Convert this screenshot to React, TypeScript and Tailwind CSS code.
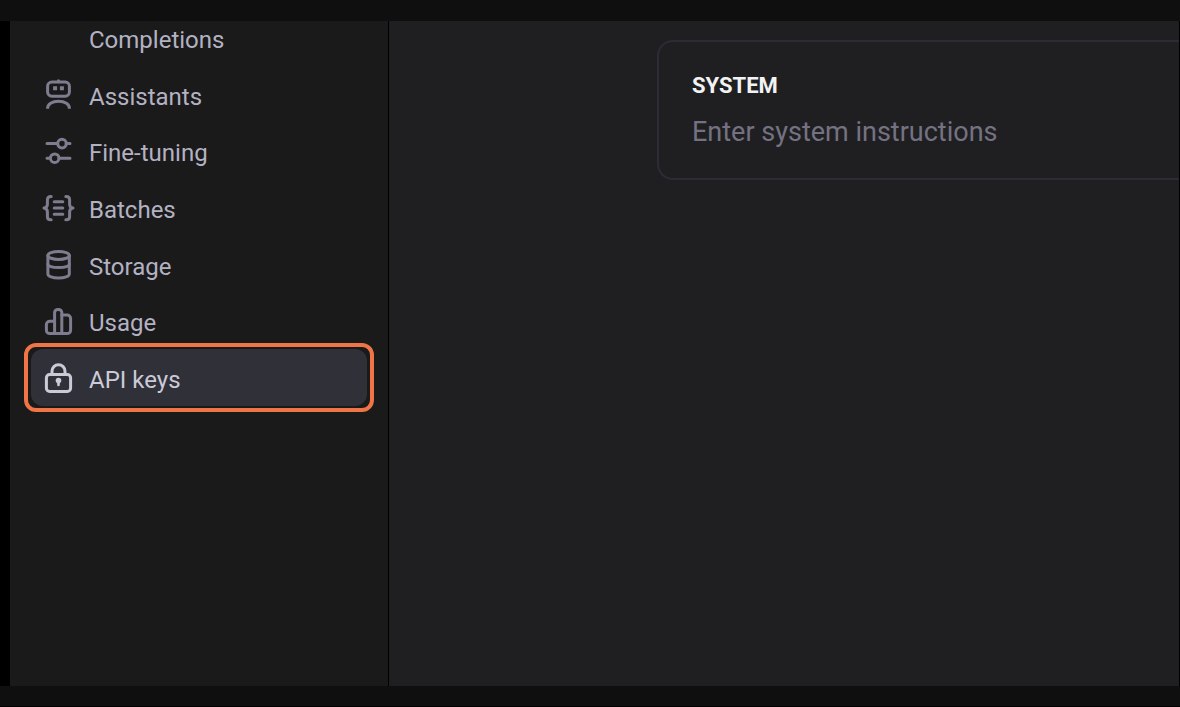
import type { ReactNode } from "react";
import clsx from "clsx";

type NavItem = {
  label: string;
  icon?: ReactNode;
  active?: boolean;
};

function Icon({ children }: { children: ReactNode }) {
  return (
    <svg
      viewBox="0 0 32 32"
      className="size-8 overflow-visible"
      fill="none"
      stroke="currentColor"
      strokeWidth="3"
      strokeLinecap="round"
      strokeLinejoin="round"
      aria-hidden="true"
    >
      {children}
    </svg>
  );
}

const navItems: NavItem[] = [
  { label: "Completions" },
  {
    label: "Assistants",
    icon: (
      <Icon>
        <path d="M16.5 1.8v1" />
        <rect x="5.6" y="3" width="21.8" height="14.2" rx="4.2" />
        <path
          d="M11.1 7.2h4v4h-4zM17.9 7.2h4v4h-4z"
          fill="currentColor"
          stroke="none"
        />
        <path d="M5.6 29.8v-.6c0-4 4.4-7 10.9-7s10.9 3 10.9 7v.6" strokeLinecap="butt" />
      </Icon>
    ),
  },
  {
    label: "Fine-tuning",
    icon: (
      <Icon>
        <path d="M5 8.6h10.6M24.2 8.6H28M5 23.2h3.4M17 23.2h11" />
        <circle cx="20" cy="8.6" r="4.3" />
        <circle cx="12.7" cy="23.2" r="4.3" />
      </Icon>
    ),
  },
  {
    label: "Batches",
    icon: (
      <Icon>
        <path d="M9.2 4.4H8.8c-2.2 0-3.4 1.2-3.4 3.4v4.4c0 2-1.2 3.6-3.4 3.9 2.2.3 3.4 1.9 3.4 3.9v4.4c0 2.2 1.2 3.4 3.4 3.4h.4" />
        <path d="M23.8 4.4h.4c2.2 0 3.4 1.2 3.4 3.4v4.4c0 2 1.2 3.6 3.4 3.9-2.2.3-3.4 1.9-3.4 3.9v4.4c0 2.2-1.2 3.4-3.4 3.4h-.4" />
        <path d="M12.2 9.8h8.6M12.2 16h8.6M12.2 22.2h8.6" />
      </Icon>
    ),
  },
  {
    label: "Storage",
    icon: (
      <Icon>
        <ellipse cx="16.6" cy="6.4" rx="10.7" ry="4" />
        <path d="M5.9 6.4v18.6c0 2.3 4.8 4.1 10.7 4.1s10.7-1.8 10.7-4.1V6.4" />
        <path d="M5.9 15.2c0 2 4.8 3.3 10.7 3.3s10.7-1.3 10.7-3.3" />
      </Icon>
    ),
  },
  {
    label: "Usage",
    icon: (
      <Icon>
        <path d="M12.6 28.6V7.6a3.2 3.2 0 0 1 3.2-3.2h.8a3.2 3.2 0 0 1 3.2 3.2v21" />
        <path d="M12.6 16.2H7.8a3.4 3.4 0 0 0-3.4 3.4v5.6a3.4 3.4 0 0 0 3.4 3.4h17.4a3.4 3.4 0 0 0 3.4-3.4V13.4a3.4 3.4 0 0 0-3.4-3.4h-5.4" />
      </Icon>
    ),
  },
  {
    label: "API keys",
    active: true,
    icon: (
      <Icon>
        <rect x="4.4" y="12.5" width="24.2" height="16.9" rx="3.2" />
        <path d="M10 12.4V9.2a6.5 6.5 0 0 1 13 0v3.2" />
        <circle cx="16.5" cy="18.6" r="2.8" fill="currentColor" stroke="none" />
        <path d="M16.5 19v4" strokeWidth="2.6" />
      </Icon>
    ),
  },
];

function Sidebar() {
  return (
    <nav className="w-[379px] shrink-0 overflow-hidden border-r border-black bg-[#1a1a1a] px-[21px]">
      {/* the list is scrolled a little past its top */}
      <ul className="-mt-[11px] grid h-[396px] auto-rows-fr">
        {navItems.map((item) => (
          <li key={item.label}>
            <a
              href="#"
              aria-current={item.active ? "page" : undefined}
              className={clsx(
                "relative flex h-full items-center gap-[15px] rounded-xl pl-[11px] text-2xl",
                item.active ? "bg-[#303038] text-[#cbcad8]" : "text-[#b3b2c3]"
              )}
            >
              <span
                className={clsx("w-8 shrink-0", item.active ? "text-[#cbcad8]" : "text-[#7e7c8e]")}
              >
                {item.icon}
              </span>
              <span className="pt-1">{item.label}</span>
              {item.active && (
                <span className="absolute -inset-x-[7px] -inset-y-[6px] rounded-xl border-4 border-[#ef7446]" />
              )}
            </a>
          </li>
        ))}
      </ul>
    </nav>
  );
}

function SystemCard() {
  return (
    <div className="flex flex-col rounded-l-2xl border-2 border-r-0 border-[#2d2c36] py-7 pl-[33px]">
      <label htmlFor="system" className="text-[22px] leading-8 font-bold text-[#f2f2f4]">
        SYSTEM
      </label>
      <input
        id="system"
        type="text"
        placeholder="Enter system instructions"
        className="mt-3 h-9 w-full bg-transparent text-[27px] text-[#f2f2f4] outline-none placeholder:text-[#747282]"
      />
    </div>
  );
}

export default function App() {
  return (
    <div className="flex min-h-screen flex-col border-b border-black bg-[#0f0f0f] font-['Roboto',sans-serif]">
      <header className="h-[21px] shrink-0" />
      <div className="flex flex-1 bg-black pr-px pl-[10px]">
        <Sidebar />
        <main className="min-w-0 flex-1 bg-[#1f1f21] pt-[19px] pl-[268px]">
          <SystemCard />
        </main>
      </div>
      <footer className="h-5 shrink-0" />
    </div>
  );
}
